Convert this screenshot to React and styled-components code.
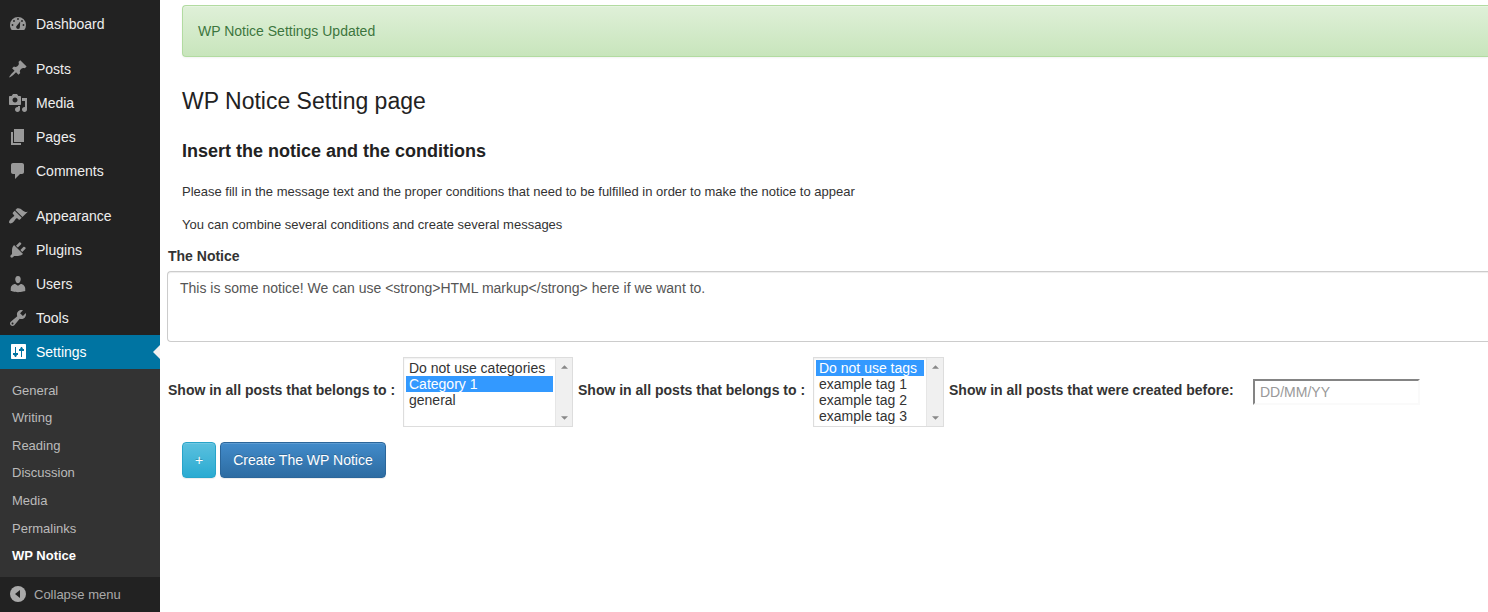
import React from 'react';
import styled, { createGlobalStyle, css } from 'styled-components';

const GlobalStyle = createGlobalStyle`
  *, *::before, *::after { box-sizing: border-box; }
  body {
    margin: 0;
    background: #fff;
    color: #333;
    font-family: Arial, "Liberation Sans", sans-serif;
    font-size: 14px;
    line-height: 20px;
  }
  button, input, select, textarea { font-family: inherit; margin: 0; }
  h1, h2, p, ul { margin: 0; padding: 0; }
`;

const Page = styled.div`
  display: flex;
  min-height: 100vh;
`;

const Sidebar = styled.nav`
  flex: 0 0 160px;
  background: #222;
`;

const MenuGroup = styled.ul`
  list-style: none;
  padding-top: ${(p) => (p.$first ? '7px' : '11px')};
`;

const MenuLink = styled.a`
  position: relative;
  display: flex;
  align-items: center;
  gap: 8px;
  height: 34px;
  padding-left: 8px;
  color: #eee;
  font-size: 14px;
  text-decoration: none;
  svg { fill: #999; }
  ${(p) =>
    p.$current &&
    css`
      background: #0074a2;
      color: #fff;
      svg { fill: #fff; }
      &::after {
        content: '';
        position: absolute;
        right: 0;
        top: 10px;
        border: 7px solid transparent;
        border-left-width: 0;
        border-right-color: #f1f1f1;
      }
    `}
`;

const Submenu = styled.ul`
  display: grid;
  grid-auto-rows: 1fr;
  align-items: center;
  min-height: 208px;
  padding: 8px 12px 7px;
  background: #333;
  list-style: none;
`;

const SubmenuLink = styled.a`
  display: block;
  font-size: 13px;
  line-height: 18px;
  text-decoration: none;
  color: ${(p) => (p.$current ? '#fff' : '#bbb')};
  font-weight: ${(p) => (p.$current ? 700 : 400)};
`;

const CollapseButton = styled.button`
  display: flex;
  align-items: center;
  gap: 6px;
  width: 100%;
  height: 34px;
  padding: 0 0 0 8px;
  border: 0;
  background: none;
  color: #aaa;
  font-size: 13px;
  cursor: pointer;
`;

const Main = styled.main`
  flex: 1;
  min-width: 0;
  padding: 5px 0 24px;
  overflow: hidden;
`;

const Intro = styled.div`
  padding-left: 22px;
`;

const Alert = styled.div`
  padding: 15px;
  border: 1px solid #b2dba1;
  border-right: 0;
  border-radius: 4px 0 0 4px;
  background: linear-gradient(#dff0d8, #c8e5bc);
  box-shadow: inset 0 1px 0 rgba(255, 255, 255, 0.25), 0 1px 2px rgba(0, 0, 0, 0.05);
  color: #3c763d;
  text-shadow: 0 1px 0 rgba(255, 255, 255, 0.2);
`;

const Title = styled.h1`
  padding-top: 30px;
  color: #222;
  font-size: 23px;
  font-weight: 400;
  line-height: 29px;
`;

const Subtitle = styled.h2`
  padding: 23px 0 19px;
  color: #222;
  font-size: 18px;
  line-height: 24px;
`;

const Hint = styled.p`
  padding-bottom: 13px;
  font-size: 13px;
  line-height: 20px;
  &:last-child { padding-bottom: 11px; }
`;

const NoticeForm = styled.form`
  padding-left: 7px;
`;

const Label = styled.label`
  font-size: 14px;
  font-weight: 700;
  line-height: 20px;
  white-space: nowrap;
`;

const NoticeField = styled.div`
  display: flex;
  flex-direction: column;
  gap: 5px;
  ${Label} { padding-left: 1px; }
`;

const NoticeText = styled.textarea`
  height: 71px;
  padding: 6px 12px;
  border: 1px solid #ccc;
  border-right: 0;
  border-radius: 4px 0 0 4px;
  box-shadow: inset 0 1px 1px rgba(0, 0, 0, 0.075);
  background: #fff;
  color: #555;
  font-size: 14px;
  line-height: 20px;
  resize: none;
  outline: 0;
`;

const Conditions = styled.div`
  display: flex;
  align-items: center;
  gap: 5px;
  padding: 15px 0 15px 1px;
`;

const Condition = styled.div`
  display: flex;
  align-items: center;
  ${Label} {
    min-width: ${(p) => p.$labelWidth}px;
    padding-bottom: 4px;
  }
`;

const ListFrame = styled.div`
  display: flex;
  width: ${(p) => p.$width}px;
  height: 70px;
  border: 1px solid #ddd;
  box-shadow: inset 0 1px 2px rgba(0, 0, 0, 0.07);
`;

const ListSelect = styled.select`
  flex: 1;
  min-width: 0;
  height: 100%;
  padding: 2px;
  border: 0;
  outline: 0;
  background: transparent;
  color: #333;
  font-size: 14px;
  overflow: hidden;
  scrollbar-width: none;
  option {
    height: 16px;
    min-height: 16px;
    padding: 0 3px;
    line-height: 16px;
  }
  option:checked {
    background: #39f linear-gradient(#39f, #39f);
    color: #fff;
    -webkit-text-fill-color: #fff;
  }
`;

const ScrollTrack = styled.div`
  display: flex;
  flex-direction: column;
  justify-content: space-between;
  align-items: center;
  width: 17px;
  padding: 7px 0 6px;
  background: #f0f0f0;
  border-left: 1px solid #e6e6e6;
`;

const DateInput = styled.input`
  width: 167px;
  height: 26px;
  padding: 2px 5px;
  border: 2px solid;
  border-color: #848484 #fafafa #fafafa #848484;
  background: #fff;
  color: #333;
  font-size: 14px;
  outline: 0;
  &::placeholder { color: #999; opacity: 1; }
`;

const Actions = styled.div`
  display: flex;
  gap: 4px;
  padding-left: 15px;
`;

const Button = styled.button`
  height: 36px;
  padding: 0 12px;
  border: 1px solid ${(p) => (p.$info ? '#28a4c9' : '#2b669a')};
  border-radius: 4px;
  background: ${(p) =>
    p.$info ? 'linear-gradient(#5bc0de, #2aabd2)' : 'linear-gradient(#428bca, #2d6ca2)'};
  box-shadow: inset 0 1px 0 rgba(255, 255, 255, 0.15), 0 1px 1px rgba(0, 0, 0, 0.075);
  color: #fff;
  font-size: 14px;
  line-height: 20px;
  text-shadow: 0 -1px 0 rgba(0, 0, 0, 0.2);
  cursor: pointer;
`;

const ICONS = {
  dashboard:
    'M3.76 16h12.48A7.98 7.98 0 0 0 18 11a8 8 0 1 0-16 0c0 1.89.66 3.63 1.76 5zM10 4.1a.9.9 0 1 1 0 1.8.9.9 0 0 1 0-1.8zM6 6.1a.9.9 0 1 1 0 1.8.9.9 0 0 1 0-1.8zm8 0a.9.9 0 1 1 0 1.8.9.9 0 0 1 0-1.8zm-1.8 1.4l-.3 5.4A1.9 1.9 0 0 1 10 15a1.9 1.9 0 0 1-1-3.5zM4.5 10.1a.9.9 0 1 1 0 1.8.9.9 0 0 1 0-1.8zm11 0a.9.9 0 1 1 0 1.8.9.9 0 0 1 0-1.8z',
  posts:
    'M10.44 3.02l1.82-1.82 6.36 6.35-1.83 1.82c-1.05-.68-2.48-.57-3.41.36l-.75.75c-.92.93-1.04 2.35-.35 3.41l-1.83 1.82-2.41-2.41-2.8 2.79c-.42.42-3.38 2.71-3.8 2.29s1.86-3.39 2.28-3.81l2.79-2.79L4.1 9.36l1.83-1.82c1.05.69 2.48.57 3.4-.36l.75-.75c.93-.92 1.05-2.35.36-3.41z',
  media:
    'M13 11V4c0-.55-.45-1-1-1h-1.67L9 1H5L3.67 3H2c-.55 0-1 .45-1 1v7c0 .55.45 1 1 1h10c.55 0 1-.45 1-1zM7 4.5c1.38 0 2.5 1.12 2.5 2.5S8.38 9.5 7 9.5 4.5 8.38 4.5 7 5.62 4.5 7 4.5zM14 5h5v11.5c0 1.38-1.12 2.5-2.5 2.5S14 17.88 14 16.5s1.12-2.5 2.5-2.5c.17 0 .34.02.5.05V8h-3V5zm-4 9.05V13h2v3.5c0 1.38-1.12 2.5-2.5 2.5S7 17.88 7 16.5 8.12 14 9.5 14c.17 0 .34.02.5.05z',
  pages: 'M6 15V2h10v13H6zm-1 1h8v2H3V5h2v11z',
  comments:
    'M5 2h9c1.1 0 2 .9 2 2v7c0 1.1-.9 2-2 2h-2l-5 5v-5H5c-1.1 0-2-.9-2-2V4c0-1.1.9-2 2-2z',
  appearance:
    'M14.48 11.06L7.41 3.99l1.5-1.5c.5-.56 2.3-.47 3.51.32 1.21.8 1.43 1.28 2.91 2.1 1.18.64 2.45 1.26 4.45.85zm-.71.71L6.7 4.7 4.93 6.47c-.39.39-.39 1.02 0 1.41l1.06 1.06c.39.39.39 1.03 0 1.42-.6.6-1.43 1.11-2.21 1.69-.35.26-.7.53-1.01.84C1.43 14.23.4 16.08 1.4 17.07c.99 1 2.84-.03 4.18-1.36.31-.31.58-.66.85-1.02.57-.78 1.08-1.61 1.69-2.21.39-.39 1.02-.39 1.41 0l1.06 1.06c.39.39 1.02.39 1.41 0z',
  plugins:
    'M13.11 4.36L9.87 7.6 8 5.73l3.24-3.24c.35-.34 1.05-.2 1.56.32.52.51.66 1.21.31 1.55zm-8 1.77l.91-1.12 9.01 9.01-1.19.84c-.71.71-2.63 1.16-3.82 1.16H6.14L4.9 17.26c-.59.59-1.54.59-2.12 0-.59-.58-.59-1.53 0-2.12l1.24-1.24v-3.88c0-1.13.4-3.19 1.09-3.89zm7.26 3.97l3.24-3.24c.34-.35 1.04-.21 1.55.31.52.51.66 1.21.31 1.55l-3.24 3.25z',
  users:
    'M10 9.25c-2.27 0-2.73-3.44-2.73-3.44C7 4.02 7.82 2 9.97 2c2.16 0 2.98 2.02 2.71 3.81 0 0-.41 3.44-2.68 3.44zm0 2.57L12.72 10c2.39 0 4.52 2.33 4.52 4.53v2.49s-3.65 1.13-7.24 1.13c-3.65 0-7.24-1.13-7.24-1.13v-2.49c0-2.25 1.94-4.48 4.47-4.48z',
  tools:
    'M16.68 9.77c-1.34 1.34-3.3 1.67-4.95.99l-5.41 6.52c-.99.99-2.59.99-3.58 0s-.99-2.59 0-3.57l6.52-5.42c-.68-1.65-.35-3.61.99-4.95 1.28-1.28 3.12-1.62 4.72-1.06l-2.89 2.89 2.82 2.82 2.86-2.87c.53 1.58.18 3.39-1.08 4.65zM3.81 16.21c.4.39 1.04.39 1.43 0 .4-.4.4-1.04 0-1.43-.39-.4-1.03-.4-1.43 0-.39.39-.39 1.03 0 1.43z',
  settings:
    'M18 16.5V3c0-.55-.45-1-1-1H4c-.55 0-1 .45-1 1v13c0 .55.45 1 1 1h13.500zM7 5h1v6h2v2H9l-1 2H7l-1-2H5v-2h2zM13 15V9h-2V7h1l1-2h1l1 2h1v2h-2v6z',
};

const Icon = ({ name }) => (
  <svg width="20" height="20" viewBox="0 0 20 20" fillRule="evenodd" aria-hidden="true">
    <path d={ICONS[name]} />
  </svg>
);

const MENU = [
  [['dashboard', 'Dashboard']],
  [
    ['posts', 'Posts'],
    ['media', 'Media'],
    ['pages', 'Pages'],
    ['comments', 'Comments'],
  ],
  [
    ['appearance', 'Appearance'],
    ['plugins', 'Plugins'],
    ['users', 'Users'],
    ['tools', 'Tools'],
    ['settings', 'Settings'],
  ],
];

const SETTINGS_PAGES = [
  'General',
  'Writing',
  'Reading',
  'Discussion',
  'Media',
  'Permalinks',
  'WP Notice',
];

const ListBox = ({ id, width, options, selected }) => (
  <ListFrame $width={width}>
    <ListSelect id={id} size={4} defaultValue={selected}>
      {options.map((option) => (
        <option key={option} value={option}>
          {option}
        </option>
      ))}
    </ListSelect>
    <ScrollTrack aria-hidden="true">
      <svg width="7" height="4" viewBox="0 0 8 4">
        <path d="M4 0L8 4H0z" fill="#888" />
      </svg>
      <svg width="7" height="4" viewBox="0 0 8 4">
        <path d="M0 0h8L4 4z" fill="#888" />
      </svg>
    </ScrollTrack>
  </ListFrame>
);

export default function App() {
  return (
    <Page>
      <GlobalStyle />
      <Sidebar aria-label="Admin menu">
        {MENU.map((group, index) => (
          <MenuGroup key={group[0][0]} $first={index === 0}>
            {group.map(([name, label]) => (
              <li key={name}>
                <MenuLink href="#" $current={name === 'settings'}>
                  <Icon name={name} />
                  {label}
                </MenuLink>
              </li>
            ))}
          </MenuGroup>
        ))}
        <Submenu>
          {SETTINGS_PAGES.map((label) => (
            <li key={label}>
              <SubmenuLink href="#" $current={label === 'WP Notice'}>
                {label}
              </SubmenuLink>
            </li>
          ))}
        </Submenu>
        <CollapseButton type="button">
          <svg width="20" height="20" viewBox="0 0 20 20" aria-hidden="true">
            <circle cx="10" cy="10" r="8" fill="#aaa" />
            <path d="M12 6v8l-5-4z" fill="#222" />
          </svg>
          Collapse menu
        </CollapseButton>
      </Sidebar>
      <Main>
        <Intro>
          <Alert role="status">WP Notice Settings Updated</Alert>
          <Title>WP Notice Setting page</Title>
          <Subtitle>Insert the notice and the conditions</Subtitle>
          <Hint>
            Please fill in the message text and the proper conditions that need to be fulfilled in
            order to make the notice to appear
          </Hint>
          <Hint>You can combine several conditions and create several messages</Hint>
        </Intro>
        <NoticeForm onSubmit={(event) => event.preventDefault()}>
          <NoticeField>
            <Label htmlFor="notice">The Notice</Label>
            <NoticeText
              id="notice"
              defaultValue="This is some notice! We can use <strong>HTML markup</strong> here if we want to."
            />
          </NoticeField>
          <Conditions>
            <Condition $labelWidth={235}>
              <Label htmlFor="category">Show in all posts that belongs to :</Label>
              <ListBox
                id="category"
                width={170}
                options={['Do not use categories', 'Category 1', 'general']}
                selected="Category 1"
              />
            </Condition>
            <Condition $labelWidth={235}>
              <Label htmlFor="tag">Show in all posts that belongs to :</Label>
              <ListBox
                id="tag"
                width={131}
                options={['Do not use tags', 'example tag 1', 'example tag 2', 'example tag 3']}
                selected="Do not use tags"
              />
            </Condition>
            <Condition $labelWidth={304}>
              <Label htmlFor="before">Show in all posts that were created before:</Label>
              <DateInput id="before" type="text" placeholder="DD/MM/YY" />
            </Condition>
          </Conditions>
          <Actions>
            <Button type="button" $info>
              +
            </Button>
            <Button type="submit">Create The WP Notice</Button>
          </Actions>
        </NoticeForm>
      </Main>
    </Page>
  );
}
